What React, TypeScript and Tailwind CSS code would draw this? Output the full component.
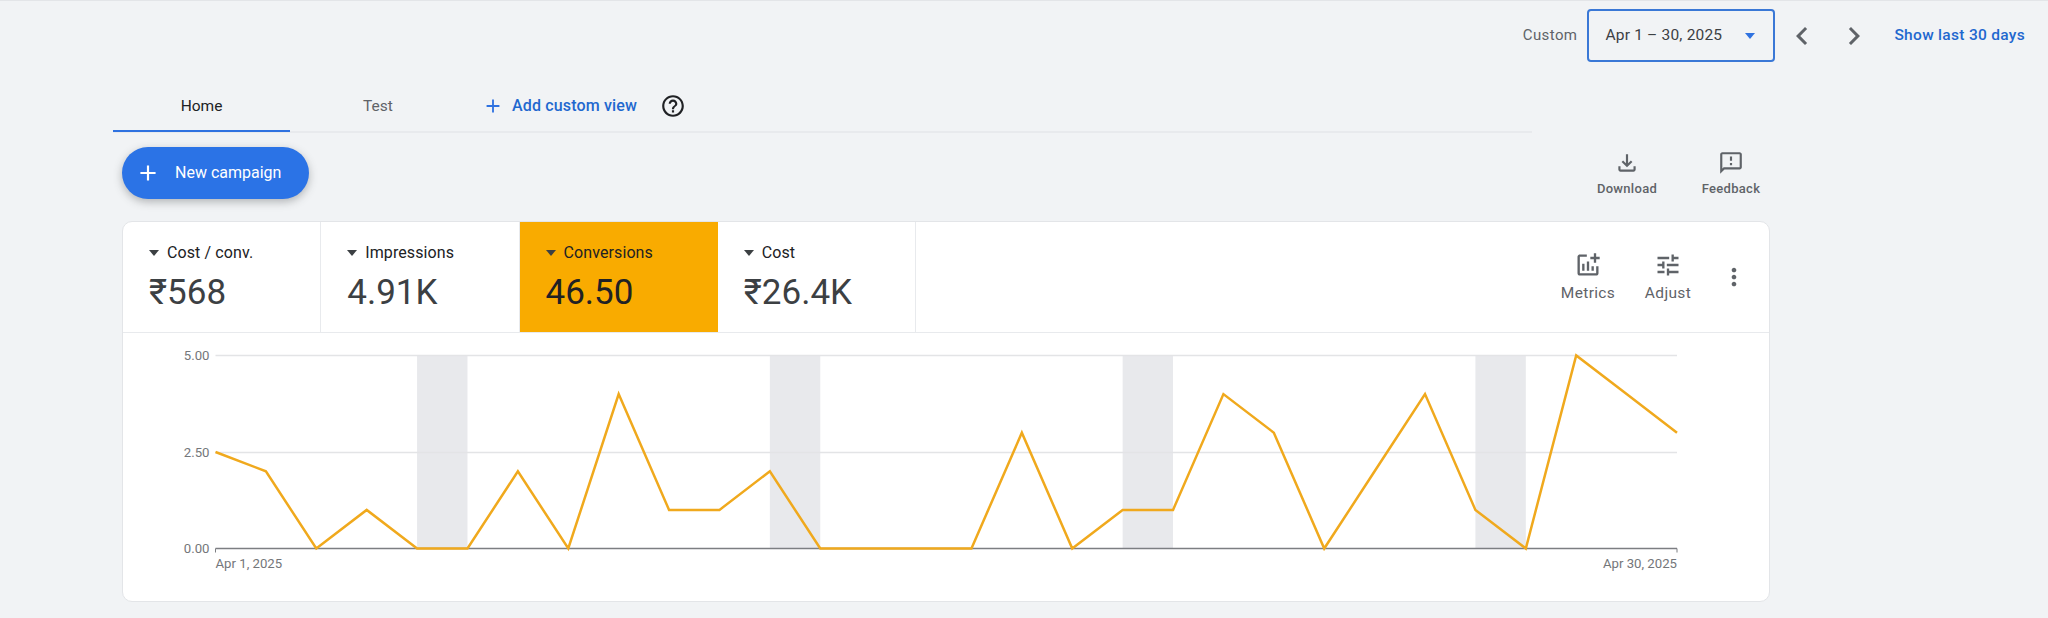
import {
  MdAdd,
  MdAddchart,
  MdChevronLeft,
  MdChevronRight,
  MdHelpOutline,
  MdMoreVert,
  MdOutlineFeedback,
  MdOutlineFileDownload,
  MdTune,
} from "react-icons/md";

const data = [
  2.5, 2, 0, 1, 0, 0, 2, 0, 4, 1, 1, 2, 0, 0, 0, 0, 3, 0, 1, 1, 4, 3, 0, 2, 4, 1, 0, 5, 4, 3,
];
const weekends = [4, 11, 18, 25];

const stats = [
  { label: "Cost / conv.", value: "₹568" },
  { label: "Impressions", value: "4.91K" },
  { label: "Conversions", value: "46.50", active: true },
  { label: "Cost", value: "₹26.4K" },
];

const CHART_LEFT = 92.5;
const CHART_RIGHT = 1554;
const Y_TOP = 22.5;
const Y_MID = 119.5;
const Y_ZERO = 215.5;

const xAt = (i: number) => CHART_LEFT + (i * (CHART_RIGHT - CHART_LEFT)) / 29;
const yAt = (v: number) => Y_ZERO - (v * (Y_ZERO - Y_TOP)) / 5;

function Caret({ className }: { className: string }) {
  return (
    <svg width="10" height="6" viewBox="0 0 10 6" className={className}>
      <path d="M0 0h10L5 6z" fill="currentColor" />
    </svg>
  );
}

function Chart() {
  const points = data.map((v, i) => `${xAt(i)},${yAt(v)}`).join(" ");
  return (
    <svg width="1646" height="267" className="block" fontFamily="Roboto, sans-serif">
      {weekends.map((i) => (
        <rect key={i} x={xAt(i)} y={Y_TOP} width={xAt(1) - xAt(0)} height={Y_ZERO - Y_TOP} fill="#e8e9ec" />
      ))}
      <line x1={CHART_LEFT} x2={CHART_RIGHT} y1={Y_TOP} y2={Y_TOP} stroke="#e3e4e6" strokeWidth="1.5" />
      <line x1={CHART_LEFT} x2={CHART_RIGHT} y1={Y_MID} y2={Y_MID} stroke="#e3e4e6" strokeWidth="1.5" />
      <line x1={CHART_LEFT} x2={CHART_RIGHT} y1={Y_ZERO} y2={Y_ZERO} stroke="#7c7e82" strokeWidth="1.5" />
      <line x1={CHART_LEFT} x2={CHART_LEFT} y1={Y_ZERO} y2={Y_ZERO + 4} stroke="#7c7e82" strokeWidth="1" />
      <line x1={CHART_RIGHT} x2={CHART_RIGHT} y1={Y_ZERO} y2={Y_ZERO + 4} stroke="#7c7e82" strokeWidth="1" />
      <polyline points={points} fill="none" stroke="#f0a91d" strokeWidth="2.5" strokeLinejoin="miter" />
      <g fill="#74767a" fontSize="13.2">
        <text x="86.5" y={Y_TOP + 4.5} textAnchor="end">5.00</text>
        <text x="86.5" y={Y_MID + 4.5} textAnchor="end">2.50</text>
        <text x="86.5" y={Y_ZERO + 4.5} textAnchor="end">0.00</text>
        <text x={CHART_LEFT} y={Y_ZERO + 19}>Apr 1, 2025</text>
        <text x={CHART_RIGHT} y={Y_ZERO + 19} textAnchor="end">Apr 30, 2025</text>
      </g>
    </svg>
  );
}

export default function App() {
  return (
    <div className="w-[2048px] h-[618px] overflow-hidden bg-[#f1f3f5] border-t border-[#e3e5e8] font-['Roboto',sans-serif]">
      {/* date range row */}
      <div className="flex items-center justify-end h-[53px] mt-2 pr-[23px]">
        <span className="text-[15px] tracking-[0.4px] text-[#5f6368]">Custom</span>
        <button className="flex items-center justify-between w-[188px] h-[53px] ml-[10px] pl-4 pr-[18px] border-2 border-[#3a78d6] rounded-[4px] text-[15.5px] tracking-[0.2px] text-[#3c4043]">
          Apr 1 – 30, 2025
          <Caret className="text-[#2f72e0]" />
        </button>
        <MdChevronLeft className="ml-[9px] text-[#5f6368]" size={36} />
        <MdChevronRight className="ml-[16px] text-[#5f6368]" size={36} />
        <span className="ml-[22px] text-[15.5px] font-[480] tracking-[0.3px] text-[#1f68cf]">Show last 30 days</span>
      </div>

      {/* tabs */}
      <div className="flex items-center w-[1419px] h-[53px] ml-[113px] mt-[18px] border-b-2 border-[#e8eaed]">
        <div className="flex items-center justify-center w-[177px] h-[53px] pt-[4px] border-b-2 border-[#2f72e0] text-[15.5px] font-[450] text-[#202124]">
          Home
        </div>
        <div className="flex items-center justify-center w-[176px] h-[53px] pt-[3px] text-[15.5px] font-[450] text-[#5f6368]">
          Test
        </div>
        <MdAdd className="ml-[16px] mt-[1px] text-[#2f72e0]" size={22} />
        <span className="ml-[8px] mt-[1px] text-[16px] font-[480] tracking-[0.15px] text-[#1f68cf]">Add custom view</span>
        <MdHelpOutline className="ml-[23px] mt-[1px] text-[#202124]" size={26} />
      </div>

      {/* actions */}
      <div className="flex items-start justify-between w-[1661px] h-[52px] ml-[122px] mt-[14px]">
        <button className="flex items-center h-[52px] w-[187px] pl-[13px] rounded-full bg-[#2b73e6] text-white shadow-[0_3px_8px_rgba(60,64,67,0.35)]">
          <MdAdd size={26} />
          <span className="ml-[14px] text-[16px] font-[450]">New campaign</span>
        </button>
        <div className="flex mt-[3px]">
          {[
            { label: "Download", Icon: MdOutlineFileDownload },
            { label: "Feedback", Icon: MdOutlineFeedback },
          ].map(({ label, Icon }) => (
            <div key={label} className="flex flex-col items-center w-[104px] text-[#5f6368]">
              <Icon size={26} />
              <span className="mt-[3px] text-[13px] font-[480] tracking-[0.3px]">{label}</span>
            </div>
          ))}
        </div>
      </div>

      {/* summary card */}
      <div className="w-[1648px] h-[381px] ml-[122px] mt-[22px] bg-white border border-[#e3e5e8] rounded-[10px] overflow-hidden">
        <div className="flex items-stretch h-[111px] border-b border-[#e8eaed]">
          {stats.map((s) => (
            <div
              key={s.label}
              className={
                s.active
                  ? "w-[198.25px] pl-[26px] pt-[21px] bg-[#f9ab00] text-[#202124]"
                  : "w-[198.25px] pl-[26px] pt-[21px] border-r border-[#e8eaed] text-[#3c4043]"
              }
            >
              <div className="flex items-center h-[20px] text-[16px] tracking-[0.1px] text-[#202124]">
                <Caret className="mr-[8px] text-[#3c4043]" />
                {s.label}
              </div>
              <div className="mt-[9px] text-[35px] leading-[42px]">{s.value}</div>
            </div>
          ))}
          <div className="flex items-center ml-auto pt-[3px]">
            <div className="flex flex-col items-center w-[80px] text-[#5f6368]">
              <MdAddchart size={28} />
              <span className="mt-[3px] text-[15.5px] tracking-[0.35px]">Metrics</span>
            </div>
            <div className="flex flex-col items-center w-[80px] text-[#5f6368]">
              <MdTune size={28} />
              <span className="mt-[3px] text-[15.5px] tracking-[0.35px]">Adjust</span>
            </div>
            <MdMoreVert className="ml-[12px] mr-[21px] -mt-[3px] text-[#5f6368]" size={28} />
          </div>
        </div>
        <Chart />
      </div>
    </div>
  );
}
